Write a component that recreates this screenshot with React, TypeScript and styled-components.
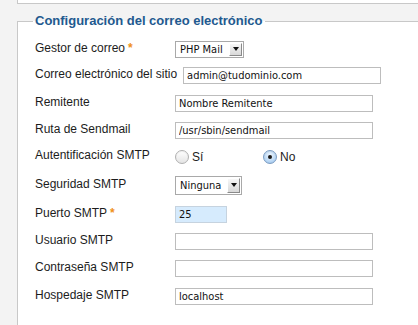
import React from 'react';
import styled, { createGlobalStyle } from 'styled-components';

const GlobalStyle = createGlobalStyle`
  html, body {
    margin: 0;
    padding: 0;
    overflow: hidden;
    background: #f3f3f3;
  }
  body {
    font-family: "Liberation Sans", Arial, sans-serif;
    color: #1c1c1c;
  }
`;

const Page = styled.div`
  padding-left: 17px;
`;

const TopPanel = styled.div`
  height: 3px;
  background: #fff;
  border-left: 1px solid #c8c8c8;
  border-bottom: 1px solid #c8c8c8;
`;

const Fieldset = styled.fieldset`
  margin: 9px 0 0;
  padding: 7px 0 20px 17px;
  border: 1px solid #c8c8c8;
  border-right: none;
  background: #fff;
  min-width: 0;
`;

const Legend = styled.legend`
  margin-left: -2px;
  padding: 0 2px;
  font-size: 13px;
  line-height: 16px;
  font-weight: bold;
  color: #22598f;
`;

const Row = styled.div<{ $h: number }>`
  display: flex;
  align-items: center;
  gap: 6px;
  height: ${(p) => p.$h}px;
`;

const Label = styled.label`
  flex: 0 0 auto;
  min-width: 134px;
  font-size: 12px;
  line-height: 15px;
  margin-top: -2px;
`;

const Star = styled.span`
  color: #f0901c;
  font-weight: bold;
  margin-left: 3px;
`;

const TextInput = styled.input<{ $w: number; $tint?: boolean }>`
  box-sizing: border-box;
  width: ${(p) => p.$w}px;
  height: 17px;
  margin: 0;
  padding: 0 3px;
  border: 1px solid ${(p) => (p.$tint ? '#c6d3df' : '#bdbdbd')};
  background: ${(p) => (p.$tint ? '#d6ebfd' : '#fff')};
  font-family: "DejaVu Sans Condensed", "DejaVu Sans", sans-serif;
  font-size: 11px;
  color: #111;
  outline: none;
`;

const Select = styled.div<{ $w: number; $h: number }>`
  box-sizing: border-box;
  display: inline-flex;
  align-items: center;
  justify-content: space-between;
  width: ${(p) => p.$w}px;
  height: ${(p) => p.$h}px;
  padding: 0 1px 0 4px;
  border: 1px solid #a9a9a9;
  background: #fff;
  font-family: "DejaVu Sans Condensed", "DejaVu Sans", sans-serif;
  font-size: 11px;
  color: #111;
`;

const SelectButton = styled.span`
  box-sizing: border-box;
  display: flex;
  align-items: center;
  justify-content: center;
  width: 13px;
  height: calc(100% - 2px);
  background: linear-gradient(#f7f7f7, #d8d8d8);
  border: 1px solid #fff;
  border-right-color: #8a8a8a;
  border-bottom-color: #8a8a8a;

  &::after {
    content: '';
    border-left: 3px solid transparent;
    border-right: 3px solid transparent;
    border-top: 4px solid #111;
  }
`;

const RadioGroup = styled.div`
  display: flex;
  align-items: center;
`;

const RadioOption = styled.span`
  display: inline-flex;
  align-items: center;
  gap: 3px;
  width: 88px;
  font-size: 12px;
`;

const RadioDot = styled.span<{ $checked?: boolean }>`
  box-sizing: border-box;
  display: inline-flex;
  align-items: center;
  justify-content: center;
  width: 14px;
  height: 14px;
  border-radius: 50%;
  border: 1px solid ${(p) => (p.$checked ? '#7b9cc2' : '#b0b0b0')};
  background: ${(p) =>
    p.$checked
      ? 'radial-gradient(circle at 50% 35%, #eef6ff 0%, #bcd9f5 60%, #8fb9e6 100%)'
      : 'linear-gradient(#ffffff, #e4e4e4)'};
  box-shadow: inset 0 1px 1px rgba(0, 0, 0, 0.06);

  &::after {
    content: '';
    display: ${(p) => (p.$checked ? 'block' : 'none')};
    width: 4px;
    height: 4px;
    border-radius: 50%;
    background: #1a1a1a;
  }
`;

type Field = {
  label: string;
  required?: boolean;
  h: number;
  control: React.ReactNode;
};

const fields: Field[] = [
  {
    label: 'Gestor de correo',
    required: true,
    h: 26,
    control: (
      <Select $w={69} $h={17}>
        PHP Mail
        <SelectButton />
      </Select>
    ),
  },
  {
    label: 'Correo electrónico del sitio',
    h: 27,
    control: <TextInput $w={198} defaultValue="admin@tudominio.com" />,
  },
  {
    label: 'Remitente',
    h: 28,
    control: <TextInput $w={198} defaultValue="Nombre Remitente" />,
  },
  {
    label: 'Ruta de Sendmail',
    h: 26,
    control: <TextInput $w={198} defaultValue="/usr/sbin/sendmail" />,
  },
  {
    label: 'Autentificación SMTP',
    h: 27,
    control: (
      <RadioGroup>
        <RadioOption>
          <RadioDot />
          Sí
        </RadioOption>
        <RadioOption>
          <RadioDot $checked />
          No
        </RadioOption>
      </RadioGroup>
    ),
  },
  {
    label: 'Seguridad SMTP',
    h: 30,
    control: (
      <Select $w={67} $h={19}>
        Ninguna
        <SelectButton />
      </Select>
    ),
  },
  {
    label: 'Puerto SMTP',
    required: true,
    h: 28,
    control: <TextInput $w={52} $tint defaultValue="25" />,
  },
  { label: 'Usuario SMTP', h: 27, control: <TextInput $w={198} defaultValue="" /> },
  { label: 'Contraseña SMTP', h: 27, control: <TextInput $w={198} type="password" defaultValue="" /> },
  { label: 'Hospedaje SMTP', h: 28, control: <TextInput $w={198} defaultValue="localhost" /> },
];

const App: React.FC = () => (
  <Page>
    <GlobalStyle />
    <TopPanel />
    <Fieldset>
      <Legend>Configuración del correo electrónico</Legend>
      {fields.map((f) => (
        <Row key={f.label} $h={f.h}>
          <Label>
            {f.label}
            {f.required && <Star>*</Star>}
          </Label>
          {f.control}
        </Row>
      ))}
    </Fieldset>
  </Page>
);

export default App;
